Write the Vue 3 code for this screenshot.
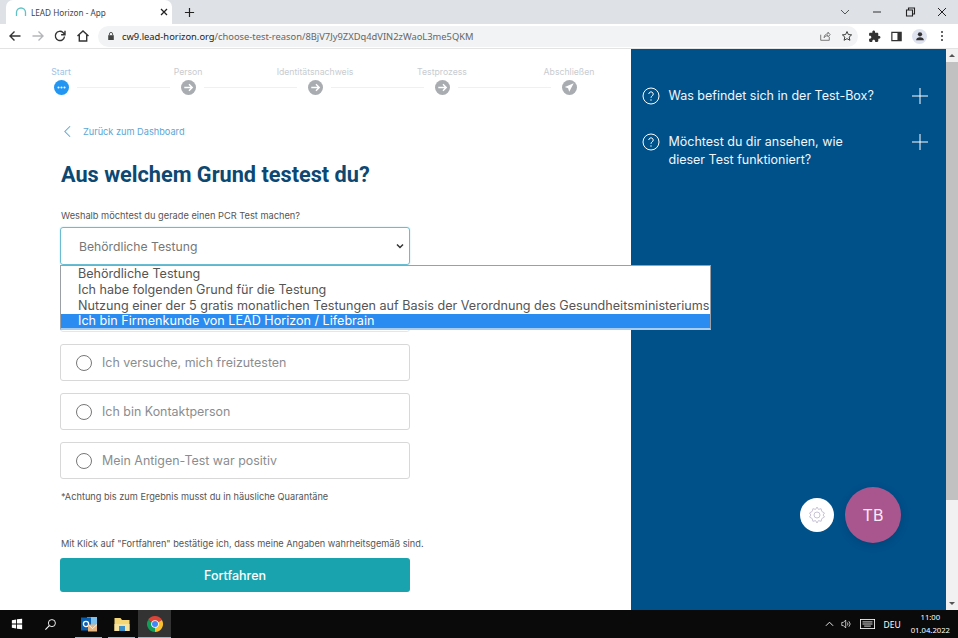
<script setup>
const steps = [
  { label: 'Start', state: 'active' },
  { label: 'Person', state: 'next' },
  { label: 'Identitätsnachweis', state: 'next' },
  { label: 'Testprozess', state: 'next' },
  { label: 'Abschließen', state: 'last' }
]
const options = [
  'Behördliche Testung',
  'Ich habe folgenden Grund für die Testung',
  'Nutzung einer der 5 gratis monatlichen Testungen auf Basis der Verordnung des Gesundheitsministeriums',
  'Ich bin Firmenkunde von LEAD Horizon / Lifebrain'
]
const radios = ['', 'Ich versuche, mich freizutesten', 'Ich bin Kontaktperson', 'Mein Antigen-Test war positiv']
</script>

<template>
  <div class="screen">
    <header class="tabstrip">
      <div class="tab">
        <svg class="favicon" viewBox="0 0 12 12"><path d="M1.500 10V6.500a4.500 4.500 0 0 1 9 0V10" fill="none" stroke="#5fc3c6" stroke-width="1.300"/></svg>
        <span class="tab-title">LEAD Horizon - App</span>
        <svg class="tab-x" viewBox="0 0 10 10"><path d="M2 2l6 6M8 2l-6 6" stroke="#222" stroke-width="1.300"/></svg>
      </div>
      <svg class="tab-plus" viewBox="0 0 12 12"><path d="M6 1v10M1 6h10" stroke="#222" stroke-width="1.300"/></svg>
      <div class="win-controls">
        <svg viewBox="0 0 12 12"><path d="M2 4l4 4 4-4" fill="none" stroke="#555" stroke-width="1"/></svg>
        <svg viewBox="0 0 12 12"><path d="M2 6h8" stroke="#333" stroke-width="1"/></svg>
        <svg viewBox="0 0 12 12"><path d="M2.500 4h6v6h-6zM4.500 4V2h6v6H8.500" fill="none" stroke="#222" stroke-width="1.100"/></svg>
        <svg viewBox="0 0 12 12"><path d="M2 2l8 8M10 2l-8 8" stroke="#222" stroke-width="1"/></svg>
      </div>
    </header>

    <nav class="toolbar">
      <svg class="nav-ico" viewBox="0 0 14 14"><path d="M12.500 7H2M6.500 2.500L2 7l4.500 4.500" fill="none" stroke="#333" stroke-width="1.400"/></svg>
      <svg class="nav-ico" viewBox="0 0 14 14"><path d="M1.500 7H12M7.500 2.500L12 7l-4.500 4.500" fill="none" stroke="#b4b6b9" stroke-width="1.400"/></svg>
      <svg class="nav-ico" viewBox="0 0 14 14"><path d="M11.500 7.500A4.600 4.600 0 1 1 10 3.500L12 5.500M12 1.800v3.900H8.100" fill="none" stroke="#333" stroke-width="1.400"/></svg>
      <svg class="nav-ico" viewBox="0 0 14 14"><path d="M1.500 7L7 2l5.500 5M3.300 6v6h7.400V6" fill="none" stroke="#333" stroke-width="1.400"/></svg>
      <div class="omnibox">
        <svg class="lock" viewBox="0 0 10 12"><path d="M1.500 5h7v6h-7z" fill="#444"/><path d="M3 5V3.500a2 2 0 0 1 4 0V5" fill="none" stroke="#444" stroke-width="1.100"/></svg>
        <span class="url"><b>cw9.lead-horizon.org</b>/choose-test-reason/8BjV7Jy9ZXDq4dVIN2zWaoL3me5QKM</span>
        <svg class="omni-ico share" viewBox="0 0 14 14"><path d="M2 5.500V12h10V8M6 9c0-3 2-4.500 4.500-4.500V2.500L13 5.500 10.500 8V6.500C8.500 6.500 7 7.500 6 9z" fill="none" stroke="#666" stroke-width="1"/></svg>
        <svg class="omni-ico star" viewBox="0 0 14 14"><path d="M7 1.800l1.600 3.500 3.800.4-2.900 2.500.9 3.800L7 10.100l-3.400 1.900.9-3.800-2.900-2.500 3.800-.4z" fill="none" stroke="#333" stroke-width="1.100"/></svg>
      </div>
      <div class="tool-right">
        <svg viewBox="0 0 24 24"><path d="M20.500 11H19V7c0-1.100-.9-2-2-2h-4V3.500C13 2.120 11.880 1 10.500 1S8 2.120 8 3.500V5H4c-1.100 0-1.990.9-1.990 2v3.800H3.500c1.490 0 2.700 1.210 2.700 2.700s-1.210 2.700-2.700 2.700H2V20c0 1.100.9 2 2 2h3.800v-1.500c0-1.490 1.210-2.700 2.700-2.700 1.490 0 2.700 1.210 2.700 2.700V22H17c1.100 0 2-.9 2-2v-4h1.500c1.380 0 2.500-1.120 2.500-2.500S21.880 11 20.500 11z" fill="#333"/></svg>
        <svg viewBox="0 0 14 14"><path d="M2 2.500h10v9H2z" fill="none" stroke="#333" stroke-width="1.300"/><path d="M8 2.500h4v9H8z" fill="#333"/></svg>
        <span class="avatar-chip"><svg viewBox="0 0 14 14"><circle cx="7" cy="5" r="2.500" fill="#333"/><path d="M2.500 12c0-2.500 2-3.500 4.500-3.500s4.500 1 4.500 3.500z" fill="#333"/></svg></span>
        <span class="kebab"><i></i><i></i><i></i></span>
      </div>
    </nav>

    <div class="viewport">
      <main class="main">
        <ol class="stepper">
          <li v-for="(s, i) in steps" :key="s.label" class="step" :class="s.state">
            <span class="step-label">{{ s.label }}</span>
            <span class="step-row">
              <span class="dot">
                <svg v-if="s.state === 'active'" viewBox="0 0 16 16"><circle cx="4.800" cy="8" r="1.100" fill="#fff"/><circle cx="8" cy="8" r="1.100" fill="#fff"/><circle cx="11.200" cy="8" r="1.100" fill="#fff"/></svg>
                <svg v-else-if="s.state === 'next'" viewBox="0 0 16 16"><path d="M3.500 8h8.500M8.500 4.500L12 8l-3.500 3.500" fill="none" stroke="#fff" stroke-width="1.500"/></svg>
                <svg v-else viewBox="0 0 16 16"><path d="M12.500 3.500L3 7.500l3.500 1.300L7.700 12.500z" fill="#fff"/></svg>
              </span>
            </span>
            <span v-if="i < steps.length - 1" class="line"></span>
          </li>
        </ol>

        <div class="form">
          <a class="back">
            <svg viewBox="0 0 8 14"><path d="M7 1L1 7l6 6" fill="none" stroke="#5ba6d6" stroke-width="1.200"/></svg>
            <span>Zurück zum Dashboard</span>
          </a>
          <h1>Aus welchem Grund testest du?</h1>
          <p class="label">Weshalb möchtest du gerade einen PCR Test machen?</p>

          <div class="select-wrap">
            <div class="select">
              <span>Behördliche Testung</span>
              <svg viewBox="0 0 10 10"><path d="M2 3.500L5 6.500l3-3" fill="none" stroke="#333" stroke-width="1.500"/></svg>
            </div>
            <ul class="popup">
              <li v-for="(o, i) in options" :key="o" :class="{ sel: i === 3 }">{{ o }}</li>
            </ul>
          </div>

          <div class="radios">
            <label v-for="r in radios" :key="r" class="radio">
              <span class="circle"></span>
              <span>{{ r }}</span>
            </label>
          </div>

          <p class="note">*Achtung bis zum Ergebnis musst du in häusliche Quarantäne</p>
          <p class="consent">Mit Klick auf "Fortfahren" bestätige ich, dass meine Angaben wahrheitsgemäß sind.</p>
          <button class="cta">Fortfahren</button>
        </div>
      </main>

      <aside class="side">
        <div class="faq">
          <svg class="q" viewBox="0 0 18 18"><circle cx="9" cy="9" r="8" fill="none" stroke="#fff" stroke-width="1"/><path d="M6.800 7a2.200 2.200 0 1 1 3.400 1.900c-.8.500-1.200 1-1.200 1.900" fill="none" stroke="#fff" stroke-width="1"/><circle cx="9" cy="13" r=".7" fill="#fff"/></svg>
          <span class="faq-text">Was befindet sich in der Test-Box?</span>
          <svg class="plus" viewBox="0 0 18 18"><path d="M9 1v16M1 9h16" stroke="#fff" stroke-width="1"/></svg>
        </div>
        <div class="faq">
          <svg class="q" viewBox="0 0 18 18"><circle cx="9" cy="9" r="8" fill="none" stroke="#fff" stroke-width="1"/><path d="M6.800 7a2.200 2.200 0 1 1 3.400 1.900c-.8.500-1.200 1-1.200 1.900" fill="none" stroke="#fff" stroke-width="1"/><circle cx="9" cy="13" r=".7" fill="#fff"/></svg>
          <span class="faq-text">Möchtest du dir ansehen, wie<br>dieser Test funktioniert?</span>
          <svg class="plus" viewBox="0 0 18 18"><path d="M9 1v16M1 9h16" stroke="#fff" stroke-width="1"/></svg>
        </div>
        <button class="fab-gear">
          <svg viewBox="0 0 20 20"><circle cx="10" cy="10" r="3" fill="none" stroke="#c9c3d6" stroke-width="1"/><path d="M10 2l1.400 2.400 2.700-.7.700 2.700L17.500 8l-1.400 2 1.400 2-2.700 1.600-.7 2.700-2.700-.7L10 18l-1.400-2.400-2.700.7-.7-2.700L2.500 12l1.400-2-1.400-2 2.700-1.600.7-2.700 2.700.7z" fill="none" stroke="#c9c3d6" stroke-width="1"/></svg>
        </button>
        <div class="fab-user">TB</div>
      </aside>

      <div class="scrollbar">
        <span class="arrow up"></span>
        <span class="thumb"></span>
        <span class="arrow down"></span>
      </div>
    </div>

    <footer class="taskbar">
      <svg class="tb-win" viewBox="0 0 14 14"><path d="M1 2.500l5-.7v4.700H1zM7 1.600l6-.8v5.700H7zM1 7.500h5v4.700l-5-.7zM7 7.500h6v5.700l-6-.8z" fill="#fff"/></svg>
      <svg class="tb-search" viewBox="0 0 14 14"><circle cx="8.500" cy="5.500" r="3.800" fill="none" stroke="#fff" stroke-width="1"/><path d="M5.700 8.300L1.500 12.500" stroke="#fff" stroke-width="1.200"/></svg>
      <div class="tb-app running">
        <svg viewBox="0 0 18 18"><rect x="7" y="2" width="10" height="9" fill="#7cc0ee"/><rect x="1" y="2.500" width="10" height="13" fill="#0a5fb0"/><circle cx="6" cy="9" r="2.600" fill="none" stroke="#fff" stroke-width="1.300"/><rect x="8" y="9.500" width="9" height="7" fill="#e8b57e"/><path d="M8 9.500l4.500 4 4.500-4" fill="none" stroke="#fff" stroke-width=".8"/></svg>
      </div>
      <div class="tb-app running">
        <svg viewBox="0 0 18 18"><path d="M1.500 3h6l1.500 2h7.500v11h-15z" fill="#f4d676"/><rect x="1.500" y="9" width="15" height="7" fill="#f7e3a0"/><rect x="6" y="11" width="6" height="5" fill="#3a8fc9"/></svg>
      </div>
      <div class="tb-app running current">
        <svg viewBox="0 0 18 18"><path d="M9 9L2.070 5A8 8 0 0 1 15.930 5z" fill="#db4437"/><path d="M9 9L15.930 5A8 8 0 0 1 9 17z" fill="#fbc02d"/><path d="M9 9V17A8 8 0 0 1 2.070 5z" fill="#0f9d58"/><circle cx="9" cy="9" r="3.800" fill="#fff"/><circle cx="9" cy="9" r="3" fill="#4285f4"/></svg>
      </div>
      <div class="tray">
        <svg class="tray-caret" viewBox="0 0 10 6"><path d="M1 5l4-4 4 4" fill="none" stroke="#fff" stroke-width="1"/></svg>
        <svg class="tray-sound" viewBox="0 0 14 12"><path d="M1 4h2l3-3v10L3 8H1z" fill="none" stroke="#fff" stroke-width=".9"/><path d="M8 4a3 3 0 0 1 0 4M10 2.500a5 5 0 0 1 0 7" fill="none" stroke="#fff" stroke-width=".9"/></svg>
        <svg class="tray-kbd" viewBox="0 0 18 12"><rect x=".5" y=".5" width="17" height="11" fill="none" stroke="#fff"/><path d="M3 3.500h12M3 6h12M5 8.500h8" stroke="#fff"/></svg>
        <span class="lang">DEU</span>
        <span class="clock"><span>11:00</span><span>01.04.2022</span></span>
      </div>
    </footer>
  </div>
</template>

<style>
html, body { margin: 0; background: #fff; overflow: hidden; }
</style>

<style scoped>
.screen { width: 958px; height: 638px; display: flex; flex-direction: column; font-family: Inter, "Noto Sans", sans-serif; overflow: hidden; }

.tabstrip { height: 24px; background: #dee1e6; display: flex; align-items: center; flex: none; }
.tab { width: 166px; margin-left: 6px; height: 24px; background: #fff; border-radius: 7px 7px 0 0; display: flex; align-items: center; box-sizing: border-box; padding: 0 3px 0 9px; }
.favicon { width: 12px; height: 12px; }
.tab-title { font: 8.200px "Noto Sans", sans-serif; color: #444; margin-left: 4px; flex: 1; }
.tab-x { width: 10px; height: 10px; }
.tab-plus { width: 11px; height: 11px; margin-left: 12px; }
.win-controls { margin-left: auto; display: flex; gap: 20.500px; padding-right: 10px; }
.win-controls svg { width: 12px; height: 12px; }

.toolbar { height: 25px; background: #fff; display: flex; align-items: center; flex: none; border-bottom: 1px solid #e3e3e3; box-sizing: border-box; padding-left: 8px; }
.nav-ico { width: 14px; height: 14px; margin-right: 8.500px; flex: none; }
.omnibox { width: 760px; height: 21px; flex: none; background: #f1f3f4; display: flex; align-items: center; padding-left: 9px; box-sizing: border-box; border-radius: 11px; }
.lock { width: 8px; height: 10px; }
.url { font: 9.350px "Noto Sans", sans-serif; color: #666; margin-left: 7px; white-space: nowrap; flex: 1; }
.url b { font-weight: 400; color: #222; }
.omni-ico { width: 12px; height: 12px; }
.share { margin-right: 10px; }
.star { margin-right: 5px; }
.tool-right { display: flex; align-items: center; gap: 9px; margin-left: 10px; }
.tool-right > svg { width: 13px; height: 13px; }
.avatar-chip { width: 15px; height: 15px; background: #dfe3f0; border-radius: 50%; display: flex; align-items: center; justify-content: center; }
.avatar-chip svg { width: 12px; height: 12px; }
.kebab { display: flex; flex-direction: column; gap: 2px; margin-left: 5px; }
.kebab i { width: 2px; height: 2px; background: #333; border-radius: 50%; display: block; }

.viewport { flex: 1; display: flex; min-height: 0; }
.main { width: 631px; flex: none; box-sizing: border-box; padding-top: 18px; }

.stepper { list-style: none; margin: 0; padding: 0 0 0 51px; display: flex; }
.step { position: relative; width: 127px; flex: none; display: flex; flex-direction: column; }
.step:last-child { width: 60px; }
.step-label { font-size: 8.700px; line-height: 10px; color: #c8ccd0; align-self: flex-start; white-space: nowrap; width: 20px; display: flex; justify-content: center; }
.step.active .step-label { color: #9cc3e8; }
.step-row { display: block; margin-top: 3px; margin-left: 2.500px; }
.dot { width: 15px; height: 15px; border-radius: 50%; background: #a9adb1; display: block; }
.dot svg { width: 15px; height: 15px; display: block; }
.step.active .dot { background: #2196f3; }
.line { position: absolute; left: 26px; width: 93px; top: 20px; height: 1px; background: #eff0f1; }

.form { width: 350px; margin-left: 60px; margin-top: 29px; display: flex; flex-direction: column; }
.back { display: flex; align-items: center; height: 14px; color: #5ba6d6; font-size: 9.200px; }
.back svg { width: 7px; height: 13px; margin-left: 4px; margin-right: 12px; }
h1 { margin: 22px 0 0 1px; font: 700 21.700px/30px Roboto, sans-serif; color: #0d4872; white-space: nowrap; }
.label { margin: 20px 0 0 1px; font-size: 9.250px; line-height: 12px; color: #555; white-space: nowrap; }
.select-wrap { position: relative; margin-top: 5px; }
.select { height: 38px; box-sizing: border-box; border: 1px solid #69bdd2; border-radius: 3px; display: flex; align-items: center; justify-content: space-between; padding: 0 4px 0 18px; font-size: 12.200px; color: #777; box-shadow: 0 0 2px #bde3ee; }
.select svg { width: 10px; height: 10px; }
.popup { position: absolute; left: 0; top: 38px; width: 651px; margin: 0; padding: 0; list-style: none; background: #fff; border: 1px solid #9aa0a6; border-bottom: 2px solid #a9cdf0; box-sizing: border-box; font-size: 12.600px; color: #555; z-index: 2; }
.popup li { height: 16px; line-height: 15px; padding-left: 17px; white-space: nowrap; }
.popup li.sel { height: 14px; line-height: 14px; background: #2a8cf0; color: #fff; }

.radios { margin-top: 30px; display: flex; flex-direction: column; gap: 12px; }
.radio { height: 37px; box-sizing: border-box; border: 1px solid #d8d8d8; border-radius: 3px; display: flex; align-items: center; padding-left: 15px; gap: 10px; font-size: 12.450px; color: #8a8d90; }
.radio:first-child { border-color: #dbe9f5; }
.circle { width: 16px; height: 16px; box-sizing: border-box; border: 1px solid #777; border-radius: 50%; }

.note { margin: 12px 0 0 1px; font-size: 9.200px; line-height: 12px; color: #555; white-space: nowrap; }
.consent { margin: 35px 0 0 1px; font-size: 9.200px; line-height: 12px; color: #555; white-space: nowrap; }
.cta { margin-top: 8px; height: 34px; border: 0; border-radius: 3px; background: #18a3ae; color: #fff; font: 500 12.500px Inter, sans-serif; }

.side { position: relative; width: 315px; flex: none; background: #00508a; padding-top: 38px; box-sizing: border-box; }
.faq { display: flex; align-items: flex-start; padding-left: 11px; color: #f0f6fa; font-size: 12.500px; line-height: 18px; margin-bottom: 28px; }
.faq-text { margin-left: 8.500px; flex: 1; }
.q { width: 18px; height: 18px; }
.plus { width: 18px; height: 18px; margin-right: 17px; }
.fab-gear { position: absolute; left: 169px; top: 449px; width: 34px; height: 34px; border: 0; padding: 0; border-radius: 50%; background: #fff; display: flex; align-items: center; justify-content: center; }
.fab-gear svg { width: 20px; height: 20px; }
.fab-user { position: absolute; left: 214px; top: 438px; width: 56px; height: 56px; border-radius: 50%; background: #a9568f; color: #fbe9f6; display: flex; align-items: center; justify-content: center; font-size: 16px; box-shadow: 0 2px 8px rgba(0,0,0,.15); }

.scrollbar { flex: 1; background: #f1f1f1; display: flex; flex-direction: column; align-items: center; position: relative; }
.arrow { width: 0; height: 0; border-left: 3px solid transparent; border-right: 3px solid transparent; margin: 5px 0; flex: none; }
.arrow.up { border-bottom: 3px solid #555; }
.arrow.down { border-top: 3px solid #555; margin-top: auto; }
.thumb { width: 100%; height: 438px; background: #c1c1c1; }

.taskbar { height: 28px; flex: none; background: #0a0a0a; display: flex; align-items: center; color: #fff; }
.tb-win { width: 12px; height: 12px; margin-left: 11px; }
.tb-search { width: 13px; height: 13px; margin-left: 21px; }
.tb-app { width: 33px; height: 28px; display: flex; align-items: center; justify-content: center; position: relative; box-sizing: border-box; }
.tb-app:nth-child(3) { margin-left: 15px; }
.tb-app svg { width: 18px; height: 18px; }
.tb-app.running::after { content: ""; position: absolute; left: 3px; right: 3px; bottom: 0; height: 1px; background: #8fb7d6; }
.tb-app.current { background: #333; }
.tb-app.current::after { left: 0; right: 0; }
.tray { margin-left: auto; display: flex; align-items: center; padding-right: 8px; }
.tray-caret { width: 9px; height: 6px; }
.tray-sound { width: 11px; height: 10px; margin-left: 7px; }
.tray-kbd { width: 17px; height: 10px; margin-left: 7px; }
.lang { font: 8.500px "Noto Sans", sans-serif; margin-left: 8px; }
.clock { display: flex; flex-direction: column; align-items: center; font: 7.700px/13px "Noto Sans", sans-serif; margin-left: 10px; }
</style>
